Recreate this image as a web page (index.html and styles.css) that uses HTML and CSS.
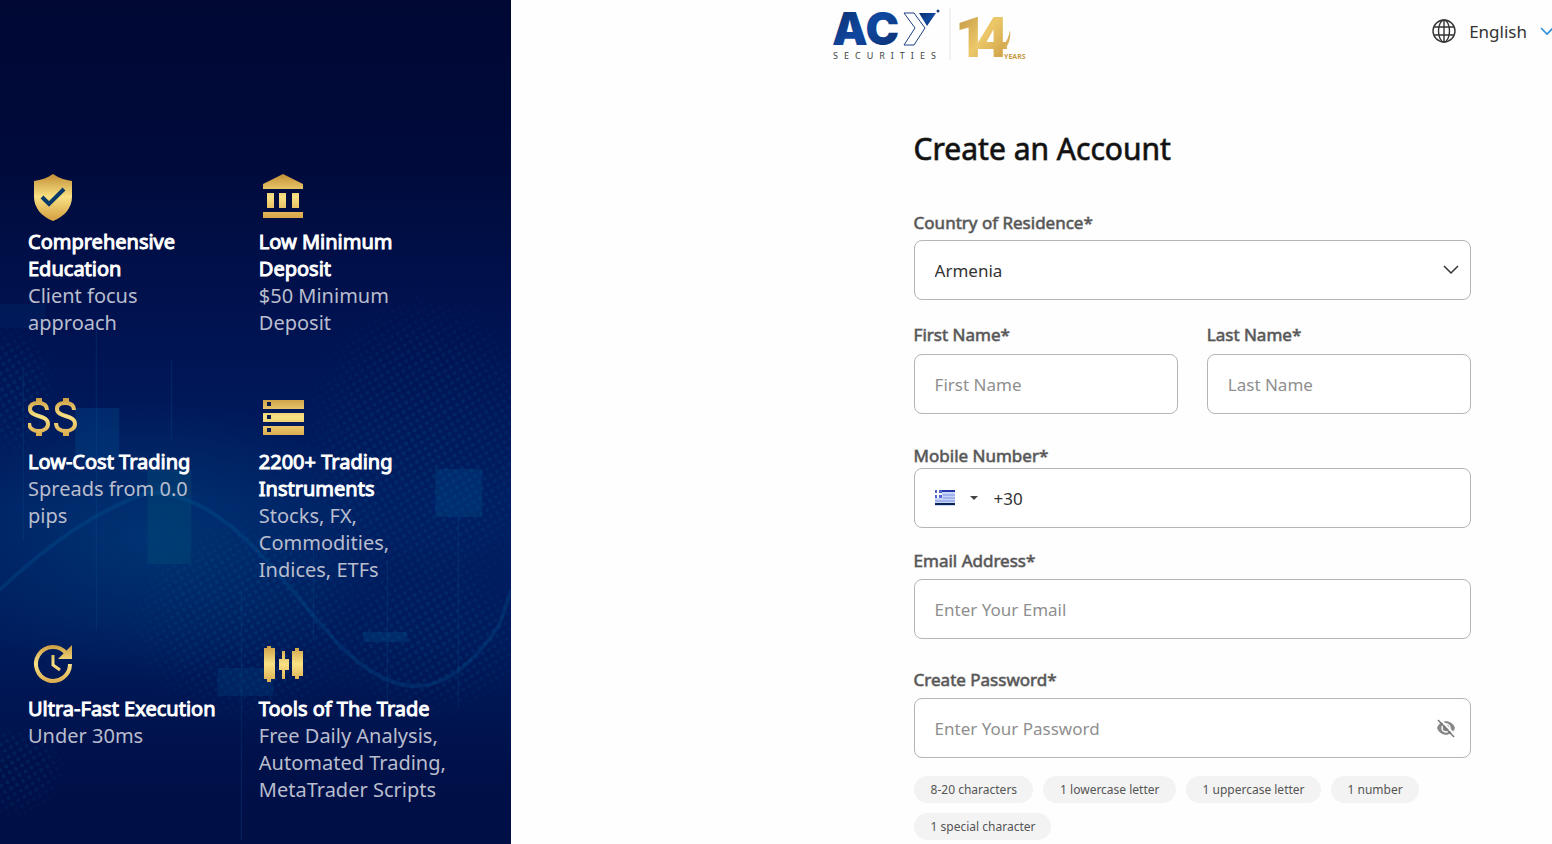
FILE: index.html
```html
<!DOCTYPE html>
<html lang="en">
<head>
    <meta charset="UTF-8">
    <meta name="viewport" content="width=device-width, initial-scale=1.0">
    <title>Create an Account | ACY Securities</title>
    <link rel="stylesheet" href="styles.css">
</head>
<body>
<div class="page">
    <!-- Left promo panel -->
    <aside class="promo">
        <svg class="promo-bg" viewBox="0 0 512 844" preserveAspectRatio="xMidYMid slice" aria-hidden="true">
            <defs>
                <pattern id="dots" width="10" height="10" patternUnits="userSpaceOnUse" patternTransform="rotate(14)">
                    <circle cx="2" cy="2" r="2" fill="#0a6aa8"/>
                    <circle cx="7" cy="7" r="2" fill="#0a6aa8"/>
                </pattern>
                <radialGradient id="fade">
                    <stop offset="0" stop-color="#fff"/>
                    <stop offset="0.6" stop-color="#fff" stop-opacity="0.7"/>
                    <stop offset="1" stop-color="#fff" stop-opacity="0"/>
                </radialGradient>
                <radialGradient id="glow">
                    <stop offset="0" stop-color="#00407c" stop-opacity="0.6"/>
                    <stop offset="1" stop-color="#00407c" stop-opacity="0"/>
                </radialGradient>
                <mask id="dotMask">
                    <ellipse cx="250" cy="620" rx="130" ry="110" fill="url(#fade)"/>
                    <ellipse cx="425" cy="450" rx="130" ry="170" fill="url(#fade)"/>
                    <ellipse cx="430" cy="640" rx="110" ry="80" fill="url(#fade)"/>
                    <ellipse cx="10" cy="390" rx="50" ry="70" fill="url(#fade)"/>
                    <ellipse cx="10" cy="770" rx="60" ry="50" fill="url(#fade)"/>
                </mask>
            </defs>
            <ellipse cx="150" cy="540" rx="240" ry="140" fill="url(#glow)"/>
            <rect width="512" height="844" fill="url(#dots)" mask="url(#dotMask)" opacity="0.2"/>
            <rect x="76" y="408" width="44" height="50" fill="#004a8c" opacity="0.35"/>
            <rect x="148" y="470" width="44" height="94" fill="#00567a" opacity="0.3"/>
            <rect x="436" y="469" width="47" height="48" fill="#005c94" opacity="0.25"/>
            <rect x="0" y="304" width="46" height="24" fill="#004a8c" opacity="0.15"/>
            <rect x="364" y="632" width="44" height="10" fill="#005c94" opacity="0.25"/>
            <rect x="218" y="668" width="56" height="28" fill="#005c94" opacity="0.2"/>
            <path d="M97 330v300M24 370v170M172 360v80M242 590v250M314 540v100M459 517v190M388 560v150" stroke="#0c5a9c" opacity="0.25"/>
            <path d="M0 590C60 535 100 510 150 492C230 495 280 580 340 645C400 705 450 700 500 625L512 590" fill="none" stroke="#0070a8" stroke-width="4" opacity="0.2"/>
        </svg>
        <!-- Shared gold gradient for the icons -->
        <svg class="defs" width="0" height="0" aria-hidden="true">
            <linearGradient id="gold" gradientUnits="userSpaceOnUse" x1="0" y1="4" x2="0" y2="46">
                <stop offset="0" stop-color="#c8963c"/>
                <stop offset="0.5" stop-color="#f8e184"/>
                <stop offset="1" stop-color="#d8a548"/>
            </linearGradient>
        </svg>
        <ul class="features">
            <li>
                <svg class="icon" viewBox="0 0 50 50" fill="url(#gold)">
                    <path d="M25 2C19 6 13 8 6 9v16c0 11 8 20 19 24c11-4 19-13 19-24V9C37 8 31 6 25 2z"/>
                    <path d="M14 25l7 7l15-15" fill="none" stroke="#063a68" stroke-width="4"/>
                </svg>
                <h2>Comprehensive Education</h2>
                <p>Client focus approach</p>
            </li>
            <li>
                <svg class="icon" viewBox="0 0 50 50" fill="url(#gold)">
                    <path d="M24 2l20 10v5H4v-5zM8 21h7v15H8zM20 21h7v15h-7zM33 21h7v15h-7zM4 40h40v6H4z"/>
                </svg>
                <h2>Low Minimum Deposit</h2>
                <p>$50 Minimum Deposit</p>
            </li>
            <li>
                <svg class="icon" viewBox="0 0 50 50" fill="none" stroke="url(#gold)" stroke-width="4">
                    <path d="M19 18c0-5-4-7-9-7c-5 0-8 2-8 6c0 9 18 5 18 15c0 4-4 7-9 7c-6 0-10-3-10-8"/>
                    <path d="M46 18c0-5-4-7-9-7c-5 0-8 2-8 6c0 9 18 5 18 15c0 4-4 7-9 7c-6 0-10-3-10-8"/>
                    <path d="M11 6v6M11 38v6M38 6v6M38 38v6" stroke-width="6"/>
                </svg>
                <h2>Low-Cost Trading</h2>
                <p>Spreads from 0.0 pips</p>
            </li>
            <li>
                <svg class="icon" viewBox="0 0 50 50" fill="url(#gold)">
                    <path d="M4 8h41v9H4zM4 21h41v9H4zM4 34h41v9H4z"/>
                    <path d="M8 10h4v4H8zM8 23h4v4H8zM8 36h4v4H8z" fill="#0a1a4c"/>
                </svg>
                <h2>2200+ Trading Instruments</h2>
                <p>Stocks, FX, Commodities, Indices, ETFs</p>
            </li>
            <li>
                <svg class="icon" viewBox="0 0 50 50" fill="none" stroke="url(#gold)" stroke-width="4">
                    <path d="M38 14A17 17 0 1 0 42 25"/>
                    <path d="M25 16v10l7 5" stroke-width="3"/>
                    <path d="M44 6v14H30z" fill="url(#gold)" stroke="none"/>
                </svg>
                <h2>Ultra-Fast Execution</h2>
                <p>Under 30ms</p>
            </li>
            <li>
                <svg class="icon" viewBox="0 0 50 50" fill="url(#gold)">
                    <path d="M5 9h3V7h4v2h4v31h-4v3H8v-3H5zM20 20h3v-8h3v8h4v11h-4v9h-3v-9h-3zM33 12h3V9h4v3h4v25h-4v3h-4v-3h-3z"/>
                </svg>
                <h2>Tools of The Trade</h2>
                <p>Free Daily Analysis, Automated Trading, MetaTrader Scripts</p>
            </li>
        </ul>
    </aside>

    <!-- Right side: header and form -->
    <main class="content">
        <header class="header">
            <a href="#" class="logo" aria-label="ACY Securities">
                <svg width="198" height="56" viewBox="0 0 198 56">
                    <defs>
                        <linearGradient id="navy" x1="0" y1="0" x2="1" y2="1">
                            <stop offset="0" stop-color="#0b2a66"/>
                            <stop offset="0.5" stop-color="#1048a0"/>
                            <stop offset="1" stop-color="#0b2a66"/>
                        </linearGradient>
                        <linearGradient id="goldLogo" x1="0" y1="0" x2="1" y2="1">
                            <stop offset="0" stop-color="#b98a38"/>
                            <stop offset="0.5" stop-color="#ecc869"/>
                            <stop offset="1" stop-color="#c4933c"/>
                        </linearGradient>
                    </defs>
                    <text class="logo-name" x="-1" y="37" fill="url(#navy)">AC</text>
                    <path d="M71 5h10l11 15l-11 17h-10l11-17z" fill="#fff" stroke="#1c3f80" stroke-width="1"/>
                    <path d="M86 5h17l-9 13z" fill="url(#navy)"/>
                    <circle cx="105" cy="3" r="1.5" fill="#1c3f80"/>
                    <text class="logo-sub" x="0" y="51">SECURITIES</text>
                    <path d="M117 0v52" stroke="#e4e4e4"/>
                    <text class="logo-years" x="122 143" y="49" fill="url(#goldLogo)">14</text>
                    <path d="M170 38c4-5 6-10 7-16c1 8-1 14-5 19z" fill="#d8b058"/>
                    <text class="logo-small" x="171" y="51">YEARS</text>
                </svg>
            </a>
            <button type="button" class="language">
                <svg width="24" height="24" viewBox="0 0 24 24" fill="none" stroke="#333" stroke-width="1.4">
                    <circle cx="12" cy="12" r="11"/>
                    <ellipse cx="12" cy="12" rx="5.5" ry="11"/>
                    <path d="M12 1v22M2 8h20M2 16h20"/>
                </svg>
                <span>English</span>
                <svg width="14" height="10" viewBox="0 0 14 10" fill="none" stroke="#2f8fd8" stroke-width="1.6">
                    <path d="M1 2l6 6l6-6"/>
                </svg>
            </button>
        </header>

        <form class="signup">
            <h1>Create an Account</h1>

            <div class="field country">
                <label for="country">Country of Residence*</label>
                <div class="control">
                    <select id="country" name="country">
                        <option selected>Armenia</option>
                        <option>Australia</option>
                        <option>Greece</option>
                    </select>
                    <svg class="chevron" width="16" height="10" viewBox="0 0 16 10" fill="none" stroke="#333" stroke-width="1.5">
                        <path d="M1 1l7 7l7-7"/>
                    </svg>
                </div>
            </div>

            <div class="names">
                <div class="field">
                    <label for="firstName">First Name*</label>
                    <input type="text" id="firstName" name="firstName" placeholder="First Name">
                </div>
                <div class="field">
                    <label for="lastName">Last Name*</label>
                    <input type="text" id="lastName" name="lastName" placeholder="Last Name">
                </div>
            </div>

            <div class="field mobile">
                <label for="mobile">Mobile Number*</label>
                <div class="phone">
                    <button type="button" class="flag" aria-label="Country code">
                        <svg width="20" height="16" viewBox="0 0 20 16">
                            <rect width="20" height="16" fill="#c8d4f8"/>
                            <path d="M8 5h12M8 8h12M0 11h20" stroke="#7c90e4"/>
                            <path d="M0 1h20" stroke="#2438a8" stroke-width="2"/>
                            <rect width="7" height="8" fill="#5068d0"/>
                            <path d="M3 0v8M0 4h7" stroke="#fff" stroke-width="2"/>
                            <path d="M0 14h20" stroke="#0c2450" stroke-width="2"/>
                        </svg>
                        <span class="arrow"></span>
                    </button>
                    <input type="tel" id="mobile" name="mobile" value="+30">
                </div>
            </div>

            <div class="field email">
                <label for="email">Email Address*</label>
                <input type="email" id="email" name="email" placeholder="Enter Your Email">
            </div>

            <div class="field password">
                <label for="password">Create Password*</label>
                <div class="control">
                    <input type="password" id="password" name="password" placeholder="Enter Your Password">
                    <button type="button" class="toggle" aria-label="Show password">
                        <svg width="20" height="20" viewBox="0 0 20 20" fill="none" stroke="#777">
                            <path d="M1 10c3-9 15-9 18 0c-3 9-15 9-18 0z" fill="#888" stroke="none"/>
                            <circle cx="10" cy="10" r="4" stroke="#fff" stroke-width="1.5"/>
                            <path d="M4 1l16 17" stroke="#fff" stroke-width="2"/>
                            <path d="M2 2l16 17" stroke-width="1.5"/>
                        </svg>
                    </button>
                </div>
            </div>

            <ul class="rules">
                <li>8-20 characters</li>
                <li>1 lowercase letter</li>
                <li>1 uppercase letter</li>
                <li>1 number</li>
                <li>1 special character</li>
            </ul>
        </form>
    </main>
</div>
</body>
</html>
```

FILE: styles.css
```css
* {
    box-sizing: border-box;
}

body {
    margin: 0;
    font-family: "Noto Sans", sans-serif;
    font-size: 17px;
    color: #333;
    background-color: #fefefe;
    overflow-x: hidden;
}

ul {
    list-style: none;
    margin: 0;
    padding: 0;
}

button {
    border: none;
    background: none;
    padding: 0;
    font: inherit;
    color: inherit;
    cursor: pointer;
}

.page {
    display: flex;
    min-height: 100vh;
}

/* Left panel */
.promo {
    position: relative;
    flex: 0 0 32.9%;
    padding: 172px 21px 0 28px;
    background: linear-gradient(#000833 0%, #000b3c 20%, #001250 38%, #001f63 60%, #001b5c 75%, #001048 92%, #000f46 100%);
}

.promo-bg {
    position: absolute;
    top: 0;
    left: 0;
    width: 100%;
    height: 100%;
}

.defs {
    position: absolute;
}

.features {
    position: relative;
    display: grid;
    grid-template-columns: 1fr 1fr;
    row-gap: 56px;
}

.features li {
    padding-right: 40px;
}

.icon {
    display: block;
    width: 50px;
    height: 50px;
    margin-bottom: 6px;
}

.features h2,
.features p {
    margin: 0;
    font-size: 20px;
    font-weight: 400;
    line-height: 27px;
}

.features h2 {
    color: #fff;
    -webkit-text-stroke: 1px #fff;
}

.features p {
    color: #b9bdcd;
}

/* Header */
.content {
    flex: 1;
    min-width: 0;
}

.header {
    display: flex;
    justify-content: space-between;
    align-items: flex-start;
    padding: 8px 0 0 31%;
    margin-right: -2px;
}

.logo svg {
    display: block;
}

.logo-name {
    font-family: Inter, sans-serif;
    font-size: 45px;
    font-weight: 900;
}

.logo-sub {
    font-size: 9px;
    letter-spacing: 6px;
    fill: #444;
}

.logo-years {
    font-family: Roboto, sans-serif;
    font-size: 56px;
    font-weight: 900;
}

.logo-small {
    font-size: 7px;
    font-weight: 700;
    fill: #c99b45;
}

.language {
    display: flex;
    align-items: center;
    height: 46px;
    gap: 13px;
}

/* Form */
.signup {
    padding: 64px 81px 0 403px;
}

h1 {
    margin: 0 0 41px;
    font-size: 30px;
    font-weight: 400;
    line-height: 42px;
    color: #111;
    -webkit-text-stroke: 1px rgba(17, 17, 17, 0.7);
}

.field label {
    display: block;
    margin-bottom: 6px;
    line-height: 24px;
    color: #555;
    -webkit-text-stroke: 1px rgba(85, 85, 85, 0.6);
}

.field input,
.field select,
.phone {
    display: block;
    width: 100%;
    height: 60px;
    padding: 0 20px;
    border: 1px solid #b5b5b5;
    border-radius: 8px;
    background-color: #fff;
    font-family: inherit;
    font-size: 17px;
    color: #333;
    outline: none;
}

.field select {
    appearance: none;
}

.field input::placeholder {
    color: #8f8f8f;
}

.country {
    margin-bottom: 23px;
}

.field.country label {
    margin-bottom: 5px;
}

.names {
    display: grid;
    grid-template-columns: 1fr 1fr;
    gap: 29px;
    margin-bottom: 30px;
}

.names label {
    margin-bottom: 7px;
}

.mobile {
    margin-bottom: 21px;
}

.field.mobile label {
    margin-bottom: 0;
}

.email {
    margin-bottom: 29px;
}

.control {
    position: relative;
}

.chevron {
    position: absolute;
    top: 25px;
    right: 12px;
    pointer-events: none;
}

.toggle {
    position: absolute;
    top: 20px;
    right: 15px;
    height: 20px;
}

.phone {
    display: flex;
    align-items: center;
    gap: 16px;
}

.flag {
    display: flex;
    align-items: center;
    gap: 15px;
}

.arrow {
    border-top: 4px solid #444;
    border-left: 4px solid transparent;
    border-right: 4px solid transparent;
}

.phone input {
    flex: 1;
    height: 58px;
    padding: 0;
    border: none;
}

/* Password rules */
.rules {
    display: flex;
    flex-wrap: wrap;
    gap: 10px;
    margin-top: 18px;
}

.rules li {
    padding: 0 16px 0 17px;
    border-radius: 14px;
    background-color: #f3f3f3;
    font-size: 12px;
    line-height: 27px;
    color: #555;
}

@media (max-width: 1300px) {
    .signup {
        padding-left: 81px;
    }
}
```
